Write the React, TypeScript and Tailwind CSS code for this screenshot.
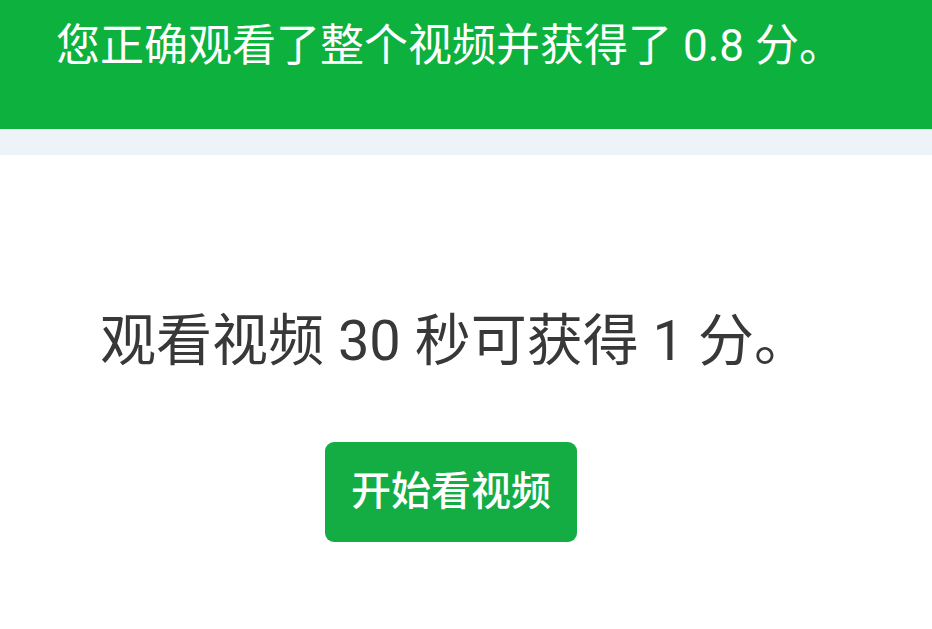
export default function App() {
  return (
    <main
      className="w-full min-h-screen bg-white"
      style={{ fontFamily: 'Roboto, "Noto Sans CJK SC", sans-serif' }}
    >
      {/* Success banner */}
      <div className="h-[129px] bg-[#0db13d] pl-[56px] pt-[19px]">
        <p className="text-[44px] leading-[54px] text-white">
          您正确观看了整个视频并获得了 0.8 分。
        </p>
      </div>
      <div className="h-[26px] bg-[#eef3f7]" />

      {/* Video prompt */}
      <section className="flex flex-col items-start pl-[100px] pt-[153px]">
        <p className="text-[56px] leading-[66px] text-[#383838]">
          观看视频 30 秒可获得 1 分。
        </p>
        <button
          type="button"
          className="mt-[68px] ml-[225px] w-[252px] h-[100px] rounded-[9px] bg-[#14ad44] text-white text-[40px] font-medium flex items-center justify-center"
        >
          开始看视频
        </button>
      </section>
    </main>
  )
}
